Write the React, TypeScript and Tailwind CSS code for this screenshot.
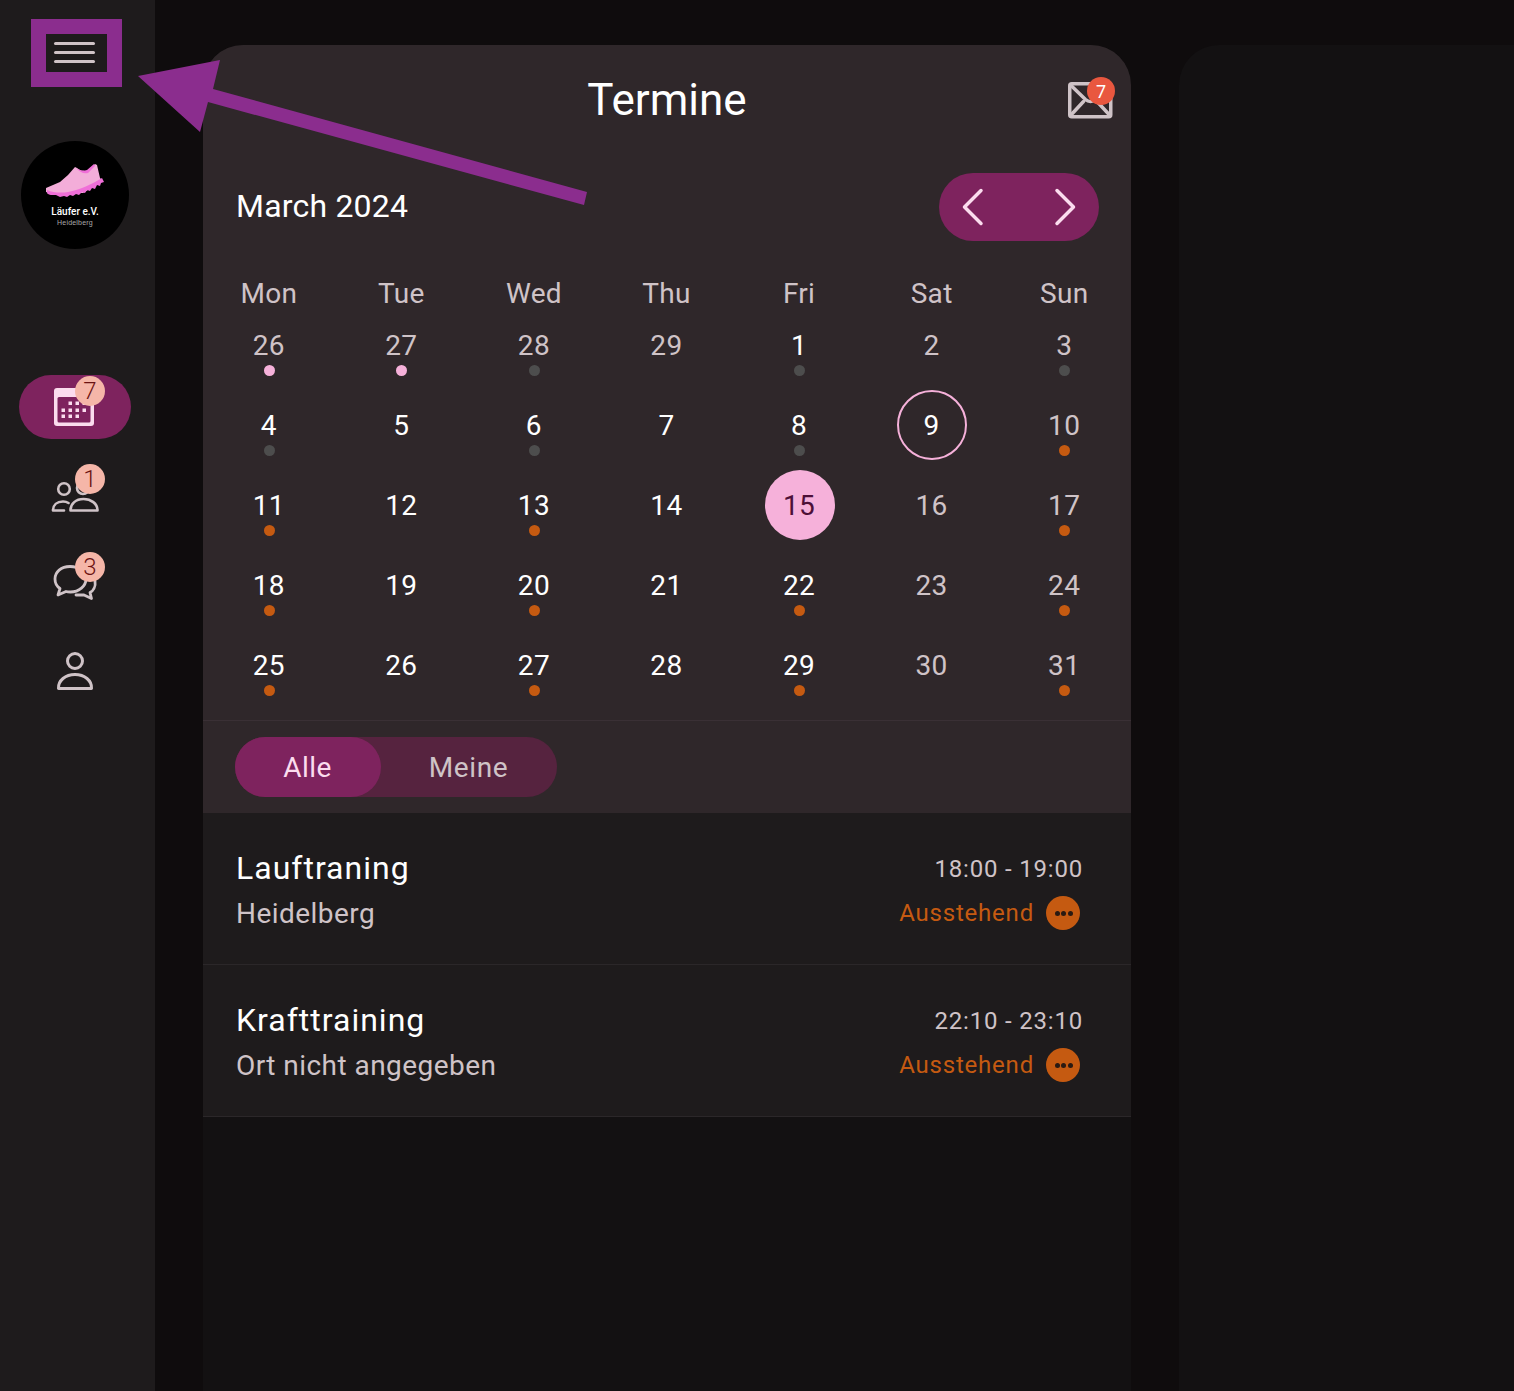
import React from "react";

type Dot = "pink" | "grey" | "orange" | null;
type Day = { n: number; dot: Dot; muted?: boolean; mark?: "today" | "selected" };

const weekdays = ["Mon", "Tue", "Wed", "Thu", "Fri", "Sat", "Sun"];

const days: Day[] = [
  { n: 26, dot: "pink", muted: true },
  { n: 27, dot: "pink", muted: true },
  { n: 28, dot: "grey", muted: true },
  { n: 29, dot: null, muted: true },
  { n: 1, dot: "grey" },
  { n: 2, dot: null, muted: true },
  { n: 3, dot: "grey", muted: true },
  { n: 4, dot: "grey" },
  { n: 5, dot: null },
  { n: 6, dot: "grey" },
  { n: 7, dot: null },
  { n: 8, dot: "grey" },
  { n: 9, dot: null, mark: "selected" },
  { n: 10, dot: "orange", muted: true },
  { n: 11, dot: "orange" },
  { n: 12, dot: null },
  { n: 13, dot: "orange" },
  { n: 14, dot: null },
  { n: 15, dot: null, mark: "today" },
  { n: 16, dot: null, muted: true },
  { n: 17, dot: "orange", muted: true },
  { n: 18, dot: "orange" },
  { n: 19, dot: null },
  { n: 20, dot: "orange" },
  { n: 21, dot: null },
  { n: 22, dot: "orange" },
  { n: 23, dot: null, muted: true },
  { n: 24, dot: "orange", muted: true },
  { n: 25, dot: "orange" },
  { n: 26, dot: null },
  { n: 27, dot: "orange" },
  { n: 28, dot: null },
  { n: 29, dot: "orange" },
  { n: 30, dot: null, muted: true },
  { n: 31, dot: "orange", muted: true },
];

const Badge = ({ n }: { n: number }) => (
  <span className="absolute left-[56px] top-[1px] flex h-[30px] w-[30px] items-center justify-center rounded-full bg-[#f5b6a8] text-[24px] font-light text-[#6b1212]">
    {n}
  </span>
);

const CalendarIcon = () => (
  <svg width="48" height="48" viewBox="0 0 48 48">
    <rect x="3" y="5" width="40" height="38" rx="3" fill="#fbdcee" />
    <rect x="6.5" y="14" width="33" height="25.500" rx="1.500" fill="#7e235e" />
    {[
      [19, 20],
      [26, 20],
      [33, 20],
      [12, 27],
      [19, 27],
      [26, 27],
      [33, 27],
      [12, 33],
      [19, 33],
      [26, 33],
    ].map(([x, y]) => (
      <rect key={`${x}-${y}`} x={x - 1.5} y={y - 1.5} width="3.500" height="3.500" fill="#fbdcee" />
    ))}
  </svg>
);

const PeopleIcon = () => (
  <svg width="48" height="48" viewBox="0 0 48 48" fill="none" stroke="#cfc3c7" strokeWidth="2.600" strokeLinejoin="round" strokeLinecap="round">
    <circle cx="13" cy="18" r="5.800" />
    <path d="M2 39.500c0-5.500 4-9 10-9 2 0 4 .5 5.500 1.500M2 39.500h11" />
    <circle cx="32" cy="17" r="6" />
    <path d="M19.500 39.500c0-7 5.500-11.500 13-11.500s14 4.500 14 11.500z" />
  </svg>
);

const ChatIcon = () => (
  <svg width="48" height="48" viewBox="0 0 48 48" fill="none" stroke="#cfc3c7" strokeWidth="2.800" strokeLinejoin="round" strokeLinecap="round">
    <path d="M19 7.500C10 7.500 4 13 4 20c0 4 2 7.500 5 9.500L7 36l8-3.500c1.500.5 3 .5 4.500.5C28 33 35 27 35 20S28 7.500 19 7.500z" />
    <path d="M44 22c1 6-2 10-5 11.500l1.500 6L33 36l-8 0" />
  </svg>
);

const PersonIcon = () => (
  <svg width="48" height="48" viewBox="0 0 48 48" fill="none" stroke="#cfc3c7" strokeWidth="3" strokeLinejoin="round">
    <circle cx="24" cy="14" r="7.500" />
    <path d="M7.500 41.500c-.5-8 7-14 16.500-14s17 6 16.500 14z" />
  </svg>
);

const Logo = () => (
  <div className="mt-[54px] flex h-[108px] w-[108px] flex-col items-center rounded-full bg-black">
    <svg width="60" height="38" viewBox="0 0 60 38" className="mt-[21px] shrink-0">
      <path d="M1 26l14-6 8-7 7-8 2 1c4 3 6 3 10 3l8-7 2 1 3 13 3 3-20 12H4L1 30z" fill="#f3add9" />
      <path
        d="M2 28c6 3 15 3 21 2 12-2 24-8 34-14l2 4-3 1-1 3-3-1-2 4-3-1-2 3-3-1-2 3-3-1-3 3-3-1-3 2-3-1-3 2-3-1-4 1-4-2-5 0c-4-1-4-1-4-5z"
        fill="#f06fd8"
      />
      <path d="M31 6c5 3 7 3 11 2l7-6 1 2-7 7c-5 1-8-1-12-5z" fill="#f06fd8" />
    </svg>
    <span className="mt-[6px] text-[10px] leading-[12px] font-medium text-white">Läufer e.V.</span>
    <span className="mt-[1px] font-['Liberation_Sans',sans-serif] text-[7px] leading-[8px] font-light tracking-[0.2px] text-[#a8a8a8]">Heidelberg</span>
  </div>
);

const Sidebar = () => (
  <aside className="flex w-[155px] shrink-0 flex-col items-center bg-[#1e1b1c] pr-[5px]">
    <div className="mt-[19px] ml-[3px] border-[15px] border-[#8b2d8e] bg-[#1e1b1c]">
      <button className="flex h-[38px] w-[61px] flex-col items-center justify-center gap-[6px] pr-[4px] pb-[2px]">
        <span className="h-[3px] w-[41px] rounded-full bg-[#cfc3c7]" />
        <span className="h-[3px] w-[41px] rounded-full bg-[#cfc3c7]" />
        <span className="h-[3px] w-[41px] rounded-full bg-[#cfc3c7]" />
      </button>
    </div>
    <Logo />
    <nav className="mt-[126px] flex flex-col gap-[24px]">
      <div className="relative flex h-[64px] w-[112px] items-center justify-center rounded-full bg-[#7e235e]">
        <CalendarIcon />
        <Badge n={7} />
      </div>
      <div className="relative flex h-[64px] w-[112px] items-center justify-center">
        <PeopleIcon />
        <Badge n={1} />
      </div>
      <div className="relative flex h-[64px] w-[112px] items-center justify-center">
        <ChatIcon />
        <Badge n={3} />
      </div>
      <div className="relative flex h-[64px] w-[112px] items-center justify-center">
        <PersonIcon />
      </div>
    </nav>
  </aside>
);

const DayCell = ({ day }: { day: Day }) => {
  let cls = day.muted ? "text-[#cfc3c7]" : "text-white";
  if (day.mark === "today") cls = "bg-[#f6b1da] text-[#4d0f38]";
  if (day.mark === "selected") cls = "border-2 border-[#f6b1da] text-white";
  return (
    <div className="relative flex h-[80px] items-center justify-center">
      <span className={`flex h-[70px] w-[70px] items-center justify-center rounded-full pt-[2px] pr-[1px] text-[28px] tracking-[0.4px] ${cls}`}>{day.n}</span>
      {day.dot === "pink" && <span className="absolute top-[60px] h-[11px] w-[11px] rounded-full bg-[#f6b1da]" />}
      {day.dot === "grey" && <span className="absolute top-[60px] h-[11px] w-[11px] rounded-full bg-[#4d4d4d]" />}
      {day.dot === "orange" && <span className="absolute top-[60px] h-[11px] w-[11px] rounded-full bg-[#c55a11]" />}
    </div>
  );
};

const EventRow = ({ title, place, time }: { title: string; place: string; time: string }) => (
  <div className="flex h-[152px] items-center justify-between border-b border-[#2b2729] bg-[#1e1b1c] pt-[5px] pr-[48px] pl-[33px]">
    <div className="flex flex-col gap-[10px]">
      <span className="text-[32px] leading-[36px] tracking-[1px] text-white">{title}</span>
      <span className="text-[28px] leading-[36px] tracking-[0.45px] text-[#cfc3c7]">{place}</span>
    </div>
    <div className="flex flex-col items-end gap-[8px]">
      <span className="text-[24px] leading-[36px] tracking-[0.8px] text-[#cfc3c7]">{time}</span>
      <div className="flex items-center gap-[12px]">
        <span className="text-[24px] leading-[36px] tracking-[0.8px] text-[#c55a11]">Ausstehend</span>
        <span className="mr-[3px] flex h-[34px] w-[34px] items-center justify-center gap-[1.5px] rounded-full bg-[#c55a11] pl-[1px]">
          <span className="h-[5px] w-[5px] rounded-full bg-[#2a1a12]" />
          <span className="h-[5px] w-[5px] rounded-full bg-[#2a1a12]" />
          <span className="h-[5px] w-[5px] rounded-full bg-[#2a1a12]" />
        </span>
      </div>
    </div>
  </div>
);

const App: React.FC = () => {
  return (
    <div className="relative flex h-[1391px] w-full overflow-hidden bg-[#0f0c0d] font-['Roboto',sans-serif]">
      <Sidebar />

      <main className="mt-[45px] ml-[48px] flex w-[928px] shrink-0 flex-col overflow-hidden rounded-t-[40px] bg-[#131112]">
        <div className="bg-[#2f272a]">
          <header className="relative flex h-[110px] items-center justify-center">
            <h1 className="text-[44px] leading-[52px] text-white">Termine</h1>
            <div className="absolute top-[32px] left-[865px] h-[40px] w-[48px]">
              <svg width="45" height="37" viewBox="0 0 45 37" className="absolute top-[5px] left-0" fill="none" stroke="#cfc3c7" strokeWidth="3.500" strokeLinejoin="round" strokeLinecap="round">
                <rect x="1.750" y="1.750" width="41" height="33" rx="2" />
                <path d="M2.500 3l15 14.500c3 2.700 7 2.700 10 0L42 3M2.500 33.500l13-14M42 33.500l-13-14" />
              </svg>
              <span className="absolute top-0 left-[19px] flex h-[28px] w-[28px] items-center justify-center rounded-full bg-[#e9573f] text-[18px] text-white">7</span>
            </div>
          </header>

          <div className="mt-[18px] flex items-center justify-between pr-[32px] pl-[33px]">
            <span className="pb-[2px] text-[32px] leading-[40px] tracking-[0.2px] text-white">March 2024</span>
            <div className="flex h-[68px] w-[160px] items-center justify-between rounded-full bg-[#7e235e] px-[22px]">
              <svg width="24" height="38" viewBox="0 0 24 38" fill="none" stroke="#fbdcee" strokeWidth="3.500" strokeLinecap="round" strokeLinejoin="round">
                <path d="M20 2.500L3.500 19 20 35.500" />
              </svg>
              <svg width="24" height="38" viewBox="0 0 24 38" fill="none" stroke="#fbdcee" strokeWidth="3.500" strokeLinecap="round" strokeLinejoin="round">
                <path d="M4 2.500L20.500 19 4 35.500" />
              </svg>
            </div>
          </div>

          <div className="mt-[33px] grid grid-cols-7">
            {weekdays.map((w) => (
              <span key={w} className="h-[31px] pr-[1px] text-center text-[28px] leading-[40px] tracking-[0.3px] text-[#cfc3c7]">
                {w}
              </span>
            ))}
          </div>
          <div className="grid grid-cols-7 pb-[15px]">
            {days.map((d, i) => (
              <DayCell key={i} day={d} />
            ))}
          </div>

          <div className="h-[93px] border-t border-[#3a3035] px-[32px] pt-[16px]">
            <div className="flex h-[60px] w-[322px] rounded-full bg-[#56233f]">
              <span className="flex w-[146px] items-center justify-center rounded-full bg-[#7e235e] pt-[2px] pr-[1px] text-[28px] tracking-[0.5px] text-[#fbdcee]">Alle</span>
              <span className="flex flex-1 items-center justify-center pt-[2px] pr-[1px] text-[28px] tracking-[0.6px] text-[#cfc3c7]">Meine</span>
            </div>
          </div>
        </div>

        <EventRow title="Lauftraning" place="Heidelberg" time="18:00 - 19:00" />
        <EventRow title="Krafttraining" place="Ort nicht angegeben" time="22:10 - 23:10" />
      </main>

      <section className="mt-[45px] ml-[48px] flex-1 rounded-tl-[40px] bg-[#131112]" />

      {/* annotation arrow on top of the screenshot */}
      <svg className="pointer-events-none absolute top-0 left-0" width="600" height="220" viewBox="0 0 600 220">
        <polygon points="138,76 220,60 213,89 587,192 584,205 208,102 200,132" fill="#8b2d8e" />
      </svg>
    </div>
  );
};

export default App;
